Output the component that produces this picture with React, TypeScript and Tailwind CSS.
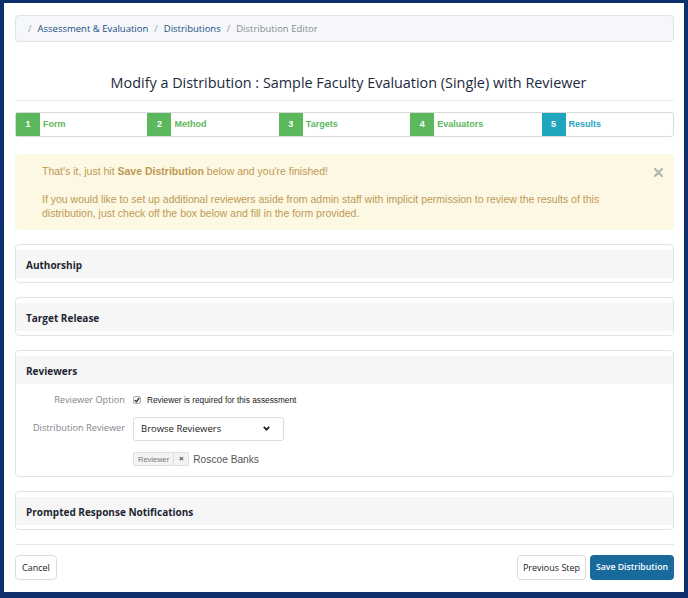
import React from 'react';

const steps = [
  { n: 1, label: 'Form', done: true },
  { n: 2, label: 'Method', done: true },
  { n: 3, label: 'Targets', done: true },
  { n: 4, label: 'Evaluators', done: true },
  { n: 5, label: 'Results', done: false },
];

const lucida = { fontFamily: '"Open Sans", "Noto Sans", sans-serif' };
const helv = { fontFamily: '"Liberation Sans", Arial, sans-serif' };

function Panel({ title, children }: { title: string; children?: React.ReactNode }) {
  return (
    <div className="rounded-[4px] border border-[#e3e3e3] bg-white pt-[5px] pb-[4px]">
      <div className="flex h-[28px] items-center bg-[#f6f6f6] px-[10px] pt-[2px]">
        <span className="text-[10px] font-bold text-[#1d2633]" style={lucida}>
          {title}
        </span>
      </div>
      {children}
    </div>
  );
}

export default function App() {
  return (
    <div className="h-[598px] w-[688px] bg-[#0d2f6b] pt-[3px] pr-[4px] pb-[6px] pl-[4px]">
      <div className="flex h-full flex-col bg-white pt-[12px] pr-[10px] pl-[11px]">
        {/* breadcrumb */}
        <div
          className="flex h-[27px] items-center gap-[6px] rounded-[4px] border border-[#dfe5eb] bg-[#f5f7fa] pt-[1px] pl-[12px] text-[9.5px]"
          style={lucida}
        >
          <span className="text-[#9aa0a6]">/</span>
          <span className="font-medium text-[#204f84]">Assessment &amp; Evaluation</span>
          <span className="text-[#9aa0a6]">/</span>
          <span className="font-medium text-[#204f84]">Distributions</span>
          <span className="text-[#9aa0a6]">/</span>
          <span className="font-medium text-[#868b91]">Distribution Editor</span>
        </div>

        <h1
          className="mt-[31px] border-b border-[#eaeaea] pb-[7px] pl-[8px] text-center text-[14.4px] leading-[20px] text-[#1b2a3d]"
          style={lucida}
        >
          Modify a Distribution : Sample Faculty Evaluation (Single) with Reviewer
        </h1>

        {/* steps */}
        <div className="mt-[11px] grid h-[25px] grid-cols-5 rounded-[3px] border border-[#d9d9d9] bg-white" style={helv}>
          {steps.map((s) => (
            <div key={s.n} className="flex items-stretch">
              <div
                className={`flex w-[24px] items-center justify-center text-[9px] font-bold text-white ${
                  s.done ? 'bg-[#5cb85c]' : 'bg-[#1fa6bf]'
                }`}
              >
                {s.n}
              </div>
              <div
                className={`flex items-center pl-[3px] text-[9px] font-bold ${
                  s.done ? 'text-[#5cb85c]' : 'text-[#1fa6bf]'
                }`}
              >
                {s.label}
              </div>
            </div>
          ))}
        </div>

        {/* alert */}
        <div
          className="relative mt-[17px] rounded-[4px] bg-[#fcf8e3] pt-[10px] pb-[10px] pl-[27px] pr-[60px] text-[10.5px] leading-[14px] text-[#c09853]"
          style={helv}
        >
          <p>
            That's it, just hit <b>Save Distribution</b> below and you're finished!
          </p>
          <p className="mt-[14px]">
            If you would like to set up additional reviewers aside from admin staff with implicit permission to review the results of this
            distribution, just check off the box below and fill in the form provided.
          </p>
          <svg className="absolute right-[11px] top-[14px]" width="9" height="9" viewBox="0 0 9 9">
            <path d="M1 1 L8 8 M8 1 L1 8" stroke="#b4b4b4" strokeWidth="2.2" strokeLinecap="round" />
          </svg>
        </div>

        <div className="mt-[14px] flex flex-col gap-[14px]">
          <Panel title="Authorship" />
          <Panel title="Target Release" />
          <Panel title="Reviewers">
            <div className="pt-[9px] pb-[5px]">
              <div className="flex items-center gap-[8px]">
                <div className="w-[109px] text-right text-[9.2px] text-[#7f868d]" style={lucida}>
                  Reviewer Option
                </div>
                <div className="flex items-center gap-[6px]">
                  <span className="flex h-[8px] w-[8px] items-center justify-center rounded-[2px] border border-[#b0b0b0] bg-[#f2f2f2]">
                    <svg width="6" height="6" viewBox="0 0 6 6">
                      <path d="M0.8 3.2 L2.4 4.8 L5.2 1" stroke="#333" strokeWidth="1.3" fill="none" />
                    </svg>
                  </span>
                  <span className="text-[8.3px] text-[#222]" style={helv}>
                    Reviewer is required for this assessment
                  </span>
                </div>
              </div>
              <div className="mt-[10px] flex items-start gap-[8px]">
                <div className="w-[109px] pt-[4px] text-right text-[9.2px] text-[#7f868d]" style={lucida}>
                  Distribution Reviewer
                </div>
                <div className="flex flex-col">
                  <div className="flex h-[24px] w-[151px] items-center justify-between rounded-[3px] border border-[#dcdcdc] bg-white pl-[7px] pr-[13px]">
                    <span className="text-[9.5px] text-[#222]" style={lucida}>
                      Browse Reviewers
                    </span>
                    <svg width="7" height="5" viewBox="0 0 7 5">
                      <path d="M0.8 0.8 L3.5 3.6 L6.2 0.8" stroke="#222" strokeWidth="1.8" fill="none" />
                    </svg>
                  </div>
                  <div className="mt-[11px] flex items-center">
                    <span className="flex h-[14px] items-center rounded-l-[2px] border border-[#dedede] bg-[#f3f3f3] px-[4px] text-[7.5px] text-[#777]" style={helv}>
                      Reviewer
                    </span>
                    <span className="flex h-[14px] w-[15px] items-center justify-center rounded-r-[2px] border border-l-0 border-[#dedede] bg-[#f3f3f3] text-[8px] font-bold text-[#444]" style={helv}>
                      ×
                    </span>
                    <span className="ml-[4px] text-[10.2px] text-[#555]" style={helv}>
                      Roscoe Banks
                    </span>
                  </div>
                </div>
              </div>
            </div>
          </Panel>
          <Panel title="Prompted Response Notifications" />
        </div>

        <div className="mt-[14px] border-t border-[#e8e8e8] pt-[10px]">
          <div className="flex items-center justify-between">
            <button className="h-[25px] rounded-[4px] border border-[#dcdcdc] bg-white px-[6px] text-[9px] text-[#222]" style={lucida}>
              Cancel
            </button>
            <div className="flex gap-[4px]">
              <button className="h-[25px] w-[69px] rounded-[4px] border border-[#dcdcdc] bg-white text-[9px] text-[#222]" style={lucida}>
                Previous Step
              </button>
              <button className="h-[25px] w-[84px] rounded-[4px] bg-[#176a9b] text-[8.7px] font-semibold text-white" style={lucida}>
                Save Distribution
              </button>
            </div>
          </div>
        </div>
      </div>
    </div>
  );
}
